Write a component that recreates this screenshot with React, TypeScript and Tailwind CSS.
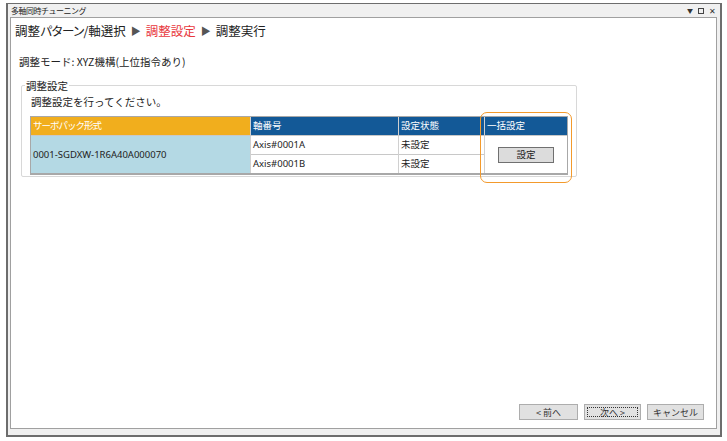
import React from "react";

const jp = { fontFamily: '"Noto Sans CJK JP", "Noto Sans", sans-serif' };
const lat = { fontFamily: '"Noto Sans", "Noto Sans CJK JP", sans-serif' };

function Btn({ label, focus, w }: { label: string; focus?: boolean; w: string }) {
  return (
    <div className={w + " h-[16px] border border-[#adadad] bg-[#e1e1e1] flex items-center justify-center p-[2px]"}>
      <div
        className={
          "w-full h-full flex items-center justify-center text-[9px] leading-none text-[#333] " +
          (focus ? "border border-dotted border-[#333]" : "")
        }
      >
        {label}
      </div>
    </div>
  );
}

export default function App() {
  return (
    <div className="w-[727px] h-[441px] bg-white pl-[6px] pt-[3px] pr-[5px] pb-[4px]" style={jp}>
      <div className="h-full border-l-2 border-t border-r-2 border-b-2 border-[#6d6d6d] bg-[#f0f0f0] flex flex-col">
        <div className="h-[13px] flex items-center justify-between pl-[3px] pr-[4px]">
          <span className="text-[8px] leading-none text-[#222] tracking-[-0.5px]">多軸同時チューニング</span>
          <div className="flex items-center gap-[5px] text-[8px] leading-none text-[#333]">
            <span className="text-[6px]">▼</span>
            <span className="w-[6px] h-[6px] border border-[#444]"></span>
            <span>✕</span>
          </div>
        </div>
        <div className="flex-1 ml-[2px] mr-[3px] mb-[6px] border border-[#a0a0a0] bg-white flex flex-col">
          <div className="flex items-center pl-[4px] pt-[6px] text-[12.5px] leading-[14px] text-[#222] gap-[5px]">
            <span>
              調整<span className="tracking-[-1.5px]">パターン</span>/軸選択
            </span>
            <span className="text-[10px] text-[#555]">▶</span>
            <span className="text-[#e8383d]">調整設定</span>
            <span className="text-[10px] text-[#555]">▶</span>
            <span>調整実行</span>
          </div>
          <div className="pl-[8px] mt-[18px] text-[10.5px] leading-[11px] text-[#222]">
            調整モード: XYZ機構(上位指令あり)
          </div>
          <div className="relative ml-[10px] mt-[18px] w-[556px] h-[92px] border border-[#d8d8d8] rounded-[2px]">
            <span className="absolute left-[3px] top-[-6px] bg-white px-[1px] text-[10.5px] leading-[11px] text-[#222]">
              調整設定
            </span>
            <div className="pl-[9px] pt-[10px] text-[10.5px] leading-[11px] text-[#222]">
              調整設定を行ってください。
            </div>
            <div className="relative ml-[8px] mt-[9px] w-[538px] border border-[#a8a8a8] border-b-2">
              <div className="flex h-[18px] text-[9.5px] leading-none text-white">
                <div className="w-[219px] bg-[#f1ae1d] flex items-center pl-[2px] tracking-[-1px]">サーボパック形式</div>
                <div className="w-[148px] bg-[#135997] border-l border-[#d0d0d0] flex items-center pl-[2px]">軸番号</div>
                <div className="w-[86px] bg-[#135997] border-l border-[#d0d0d0] flex items-center pl-[2px]">設定状態</div>
                <div className="flex-1 bg-[#135997] border-l border-[#d0d0d0] flex items-center pl-[2px]">一括設定</div>
              </div>
              <div className="flex h-[38px] text-[9.5px] leading-none text-[#222] border-t border-[#c8c8c8]">
                <div className="w-[219px] bg-[#b4d9e4] flex items-center pl-[2px]" style={lat}>
                  0001-SGDXW-1R6A40A000070
                </div>
                <div className="w-[148px] border-l border-[#d0d0d0] flex flex-col">
                  <div className="flex-1 flex items-center pl-[2px] border-b border-[#c8c8c8]" style={lat}>Axis#0001A</div>
                  <div className="flex-1 flex items-center pl-[2px]" style={lat}>Axis#0001B</div>
                </div>
                <div className="w-[86px] border-l border-[#d0d0d0] flex flex-col">
                  <div className="flex-1 flex items-center pl-[2px] border-b border-[#c8c8c8]">未設定</div>
                  <div className="flex-1 flex items-center pl-[2px]">未設定</div>
                </div>
                <div className="flex-1 border-l border-[#d0d0d0] flex items-start justify-center pt-[11px]">
                  <div className="w-[56px] h-[16px] border border-[#707070] bg-[#dcdcdc] flex items-center justify-center text-[9.5px] leading-none">
                    設定
                  </div>
                </div>
              </div>
            </div>
            <div className="absolute left-[458px] top-[26px] w-[92px] h-[71px] border-[1.5px] border-[#f39a2c] rounded-[7px]"></div>
          </div>
          <div className="flex-1"></div>
          <div className="flex justify-end gap-[6px] pr-[12px] pb-[8px]">
            <Btn label="< 前へ" w="w-[59px]" />
            <Btn label="次へ >" focus w="w-[57px]" />
            <Btn label="キャンセル" w="w-[57px]" />
          </div>
        </div>
      </div>
    </div>
  );
}
